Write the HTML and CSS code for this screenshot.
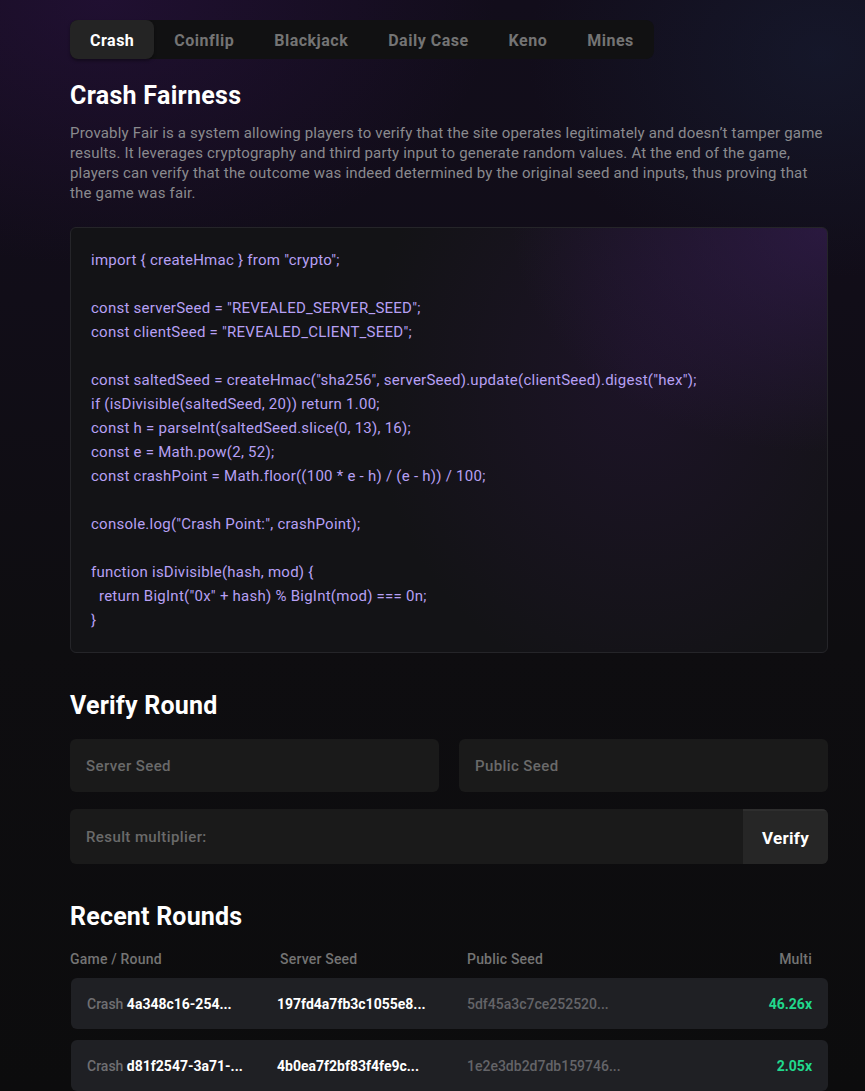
FILE: index.html
```html
<!DOCTYPE html>
<html lang="en">
<head>
<meta charset="utf-8">
<title>Crash Fairness</title>
<link rel="stylesheet" href="styles.css">
</head>
<body>
<main class="page">
  <nav class="tabs">
    <button class="tab active">Crash</button>
    <button class="tab">Coinflip</button>
    <button class="tab">Blackjack</button>
    <button class="tab">Daily Case</button>
    <button class="tab">Keno</button>
    <button class="tab">Mines</button>
  </nav>

  <h1 class="title">Crash Fairness</h1>
  <p class="desc">Provably Fair is a system allowing players to verify that the site operates legitimately and doesn’t tamper game results. It leverages cryptography and third party input to generate random values. At the end of the game, players can verify that the outcome was indeed determined by the original seed and inputs, thus proving that the game was fair.</p>

  <pre class="code">import { createHmac } from "crypto";

const serverSeed = "REVEALED_SERVER_SEED";
const clientSeed = "REVEALED_CLIENT_SEED";

const saltedSeed = createHmac("sha256", serverSeed).update(clientSeed).digest("hex");
if (isDivisible(saltedSeed, 20)) return 1.00;
const h = parseInt(saltedSeed.slice(0, 13), 16);
const e = Math.pow(2, 52);
const crashPoint = Math.floor((100 * e - h) / (e - h)) / 100;

console.log("Crash Point:", crashPoint);

function isDivisible(hash, mod) {
  return BigInt("0x" + hash) % BigInt(mod) === 0n;
}</pre>

  <h2 class="section-title verify-title">Verify Round</h2>
  <div class="seed-row">
    <input class="field" type="text" placeholder="Server Seed">
    <input class="field" type="text" placeholder="Public Seed">
  </div>
  <div class="result-row">
    <input class="result-input" type="text" placeholder="Result multiplier:">
    <button class="verify-btn">Verify</button>
  </div>

  <h2 class="section-title rounds-title">Recent Rounds</h2>
  <div class="table-head">
    <span>Game / Round</span>
    <span>Server Seed</span>
    <span>Public Seed</span>
    <span class="right">Multi</span>
  </div>
  <div class="rows">
    <div class="row">
      <span><span class="game">Crash</span> <span class="strong">4a348c16-254...</span></span>
      <span class="strong">197fd4a7fb3c1055e8...</span>
      <span class="muted">5df45a3c7ce252520...</span>
      <span class="multi">46.26x</span>
    </div>
    <div class="row">
      <span><span class="game">Crash</span> <span class="strong">d81f2547-3a71-...</span></span>
      <span class="strong">4b0ea7f2bf83f4fe9c...</span>
      <span class="muted">1e2e3db2d7db159746...</span>
      <span class="multi">2.05x</span>
    </div>
  </div>
</main>
</body>
</html>
```

FILE: styles.css
```css
* { box-sizing: border-box; }

html, body { margin: 0; padding: 0; }

body {
  min-height: 1091px;
  font-family: Roboto, "Liberation Sans", sans-serif;
  color: #fff;
  background:
    radial-gradient(ellipse 560px 380px at 12% 0%, rgba(55, 20, 85, 0.38), transparent 70%),
    radial-gradient(ellipse 420px 320px at 95% 5%, rgba(25, 35, 60, 0.45), transparent 70%),
    linear-gradient(180deg, #120d1b 0px, #110d18 300px, #0e0d10 650px, #0c0c0d 1091px);
  overflow: hidden;
}

.page {
  width: 758px;
  margin-left: 70px;
  padding-top: 20px;
}

.tabs {
  display: inline-flex;
  background: #111112;
  border-radius: 8px;
  height: 39px;
}

.tab {
  font-family: inherit;
  font-size: 16px;
  font-weight: 700;
  letter-spacing: 0.5px;
  line-height: 41px;
  color: #747474;
  background: transparent;
  border: 0;
  padding: 0 20px;
  border-radius: 8px;
  cursor: pointer;
}

.tab.active {
  background: #242424;
  color: #fff;
  box-shadow: 0 2px 3px rgba(0, 0, 0, 0.35);
}

.title {
  font-size: 25px;
  font-weight: 700;
  letter-spacing: 0.3px;
  line-height: 30px;
  margin: 22px 0 12px;
}

.desc {
  font-size: 15px;
  letter-spacing: 0.18px;
  line-height: 20px;
  color: #8a8a8e;
  margin: 0;
}

.code {
  margin: 24px 0 0;
  padding: 20px 20px;
  border: 1px solid #252529;
  border-radius: 6px;
  font-family: Roboto, "Liberation Sans", sans-serif;
  font-size: 15px;
  letter-spacing: 0.25px;
  line-height: 24px;
  color: #b7a0f4;
  white-space: pre;
  background:
    radial-gradient(ellipse 420px 300px at 100% 0%, rgba(60, 30, 95, 0.55), transparent 75%),
    radial-gradient(ellipse 360px 420px at 75% 35%, rgba(40, 20, 60, 0.45), transparent 75%),
    #131316;
}

.section-title {
  font-size: 25px;
  font-weight: 700;
  letter-spacing: 0.2px;
  line-height: 30px;
  margin: 0;
}

.verify-title { margin-top: 38px; }

.seed-row {
  display: grid;
  grid-template-columns: 1fr 1fr;
  gap: 20px;
  margin-top: 18px;
}

.field,
.result-input {
  font-family: inherit;
  font-size: 15px;
  font-weight: 500;
  letter-spacing: 0.4px;
  color: #ddd;
  background: #1a1a1a;
  border: 0;
  outline: none;
  border-radius: 6px;
  height: 53px;
  padding: 0 16px;
  width: 100%;
}

.field::placeholder,
.result-input::placeholder { color: #6a6a6a; }

.result-row {
  display: flex;
  margin-top: 17px;
  height: 55px;
  border-radius: 6px;
  background: #1a1a1a;
  overflow: hidden;
}

.result-input {
  flex: 1;
  height: 55px;
  border-radius: 0;
  background: transparent;
}

.verify-btn {
  width: 85px;
  font-family: inherit;
  font-size: 17px;
  font-weight: 700;
  letter-spacing: 0.3px;
  color: #fff;
  background: #262626;
  border: 0;
  border-top: 2px solid #2e2e2e;
  cursor: pointer;
}

.rounds-title { margin-top: 38px; }

.table-head {
  display: grid;
  grid-template-columns: 210px 187px 1fr auto;
  margin-top: 17px;
  padding-right: 16px;
  font-size: 14px;
  font-weight: 500;
  letter-spacing: 0.2px;
  line-height: 20px;
  color: #747474;
}

.right { text-align: right; }

.rows {
  display: flex;
  flex-direction: column;
  gap: 11px;
  margin-top: 9px;
}

.row {
  display: grid;
  grid-template-columns: 190px 190px 1fr auto;
  align-items: center;
  height: 51px;
  margin-left: 1px;
  padding: 0 16px 0 16px;
  background: #1f2024;
  border-radius: 6px;
  font-size: 14px;
  font-weight: 700;
}

.game { color: #6f6f72; font-weight: 500; }
.strong { color: #fff; }
.muted { color: #646468; font-weight: 500; }
.multi { color: #21d88c; text-align: right; }
```
